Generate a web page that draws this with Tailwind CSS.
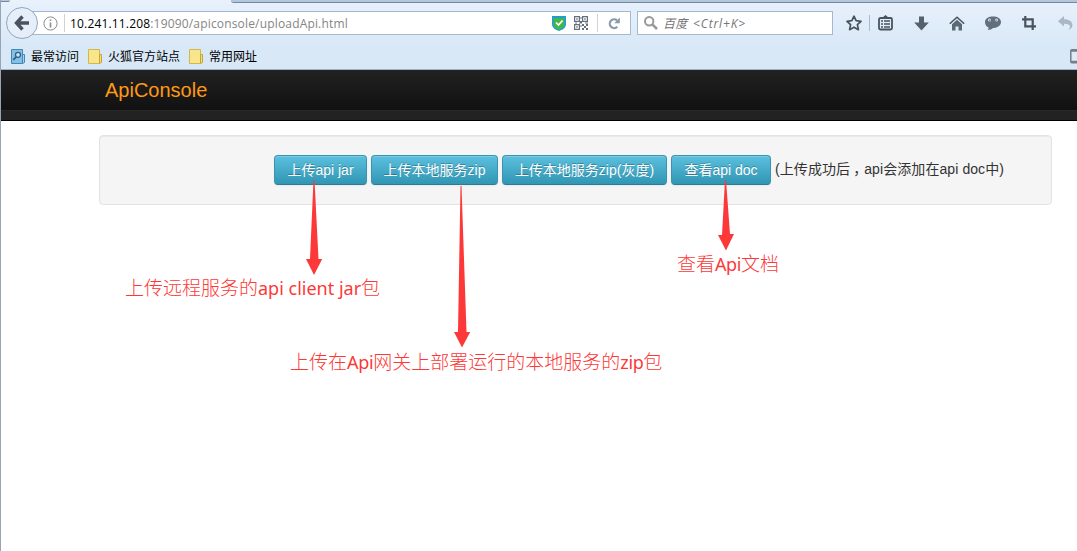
<!DOCTYPE html>
<html lang="zh-CN">
<head>
<meta charset="utf-8">
<title>ApiConsole</title>
<script src="https://cdn.jsdelivr.net/npm/@tailwindcss/browser@4"></script>
</head>
<body class="bg-white font-['Liberation_Sans','Noto_Sans_CJK_SC',sans-serif]">
<div class="relative flex h-[551px] w-[1077px] flex-col overflow-hidden border-l border-[#98a3b3]">

  <!-- Browser chrome -->
  <header class="flex h-[70px] flex-col border-b border-[#9fb3c8] bg-linear-to-b from-[#e8f1fc] to-[#d8e8f7] to-70% font-['Open_Sans','Noto_Sans_CJK_SC',sans-serif]">
    <div class="flex h-[3px]">
      <div class="h-[2px] w-[9px] rounded-br-[6px] border-b border-[#7288a3] bg-[#b5c7da]"></div>
      <div class="w-[221px]"></div>
      <div class="flex-1 rounded-bl-[4px] border-b border-[#7288a3] bg-[#b5c7da]"></div>
    </div>
    <div class="flex h-10 items-center">
      <div class="z-10 ml-[5px] flex size-8 shrink-0 items-center justify-center rounded-full border border-[#93a6bd] bg-[#e6eef9]">
        <svg class="h-[16px] w-[16px]" viewBox="0 0 16 16" fill="none" stroke="#49535f" stroke-width="3.400"><path d="M8.5 1.500 2.500 8l6 6.500M3 8h12"/></svg>
      </div>
      <div class="-ml-[6px] flex h-6 w-[599px] items-center border border-[#a5b8cd] bg-white">
        <svg class="ml-[10px] size-[15px]" viewBox="0 0 15 15" fill="none" stroke="#8c8c8c"><circle cx="7.5" cy="7.5" r="6.6"/><path d="M7.5 6.5v5M7.5 3.5v1.6" stroke-width="1.6"/></svg>
        <div class="ml-1.5 h-[18px] w-px bg-[#d2d2d2]"></div>
        <div class="ml-[5px] w-[482px] pt-px text-[12px] leading-6 tracking-[0.17px] whitespace-nowrap text-[#858585]"><span class="text-black">10.241.11.208</span>:19090/apiconsole/uploadApi.html</div>
        <svg class="h-[15px] w-[14px] shrink-0" viewBox="0 0 14 15"><path d="M0 0h14v8c0 4-4 6-7 7-3-1-7-3-7-7z" fill="#249bd0"/><path d="M1.5 2h11v6c0 3-3 5-5.500 6-2.500-1-5.500-3-5.500-6z" fill="#43b74a"/><path d="m4 6.500 2.500 2.500 4-4.500" fill="none" stroke="#fff" stroke-width="1.700"/></svg>
        <svg class="ml-2 size-[14px] shrink-0" viewBox="0 0 14 14" fill="#66707c"><path fill-rule="evenodd" d="M0 0h6v6H0zM1.200 1.200v3.600h3.600V1.200zM8 0h6v6H8zM9.200 1.200v3.600h3.600V1.200zM0 8h6v6H0zM1.200 9.200v3.600h3.600V9.200z"/><path d="M2.300 2.300h1.400v1.400H2.300zM10.300 2.300h1.400v1.400h-1.400zM2.300 10.300h1.400v1.400H2.300zM6.500 1h1v2h-1zM6 5h2v1.500H6zM1 6.500h2v1H1zM5 6.500h3v1H5zM11 6.500h3v1h-3zM8 8h2v2H8zM10 10h2v2h-2zM12 8h2v2h-2zM8 12h2v2H8zM12 12h2v2h-2zM6.500 9h1v2h-1z"/></svg>
        <div class="ml-[9px] h-[18px] w-px bg-[#d2d2d2]"></div>
        <svg class="ml-[10px] size-[13px]" viewBox="0 0 13 13"><path d="M9.300 9.800A4.400 4.400 0 1 1 9 3.300" fill="none" stroke="#8b99a9" stroke-width="2.200"/><path d="M11.800.5v5.700H6.200z" fill="#8b99a9"/></svg>
      </div>
      <div class="ml-1.5 flex h-6 w-[196px] items-center border border-[#a5b8cd] bg-white">
        <svg class="ml-1.5 size-[14px]" viewBox="0 0 14 14" fill="none" stroke="#999"><circle cx="5.200" cy="5.200" r="4.200" stroke-width="2"/><path d="m8.300 8.300 4.700 4.700" stroke-width="2.600"/></svg>
        <div class="ml-[5px] pt-px text-[12px] leading-6 tracking-[0.3px] whitespace-nowrap text-[#757575] italic [word-spacing:2px]">百度 <span class="tracking-[0.85px]">&lt;Ctrl+K&gt;</span></div>
      </div>
      <svg class="ml-[13px] size-4 shrink-0" viewBox="0 0 16 16" fill="none" stroke="#49535f" stroke-width="1.700" stroke-linejoin="round"><path d="m8 1.200 2.100 4.500 4.900.6-3.600 3.400 1 5L8 12.200l-4.400 2.500 1-5L1 6.300l4.900-.6z"/></svg>
      <div class="ml-[7px] h-4 w-px bg-[#a9bccf]"></div>
      <svg class="ml-2 h-4 w-[15px] shrink-0" viewBox="0 0 15 16"><path d="M4 3 7.500 0 11 3z" fill="#49535f"/><rect x="1" y="3" width="13" height="11.500" rx="1.500" fill="none" stroke="#49535f" stroke-width="1.800"/><path d="M3 6h2M6 6h6M3 9h2M6 9h6M3 12h2M6 12h6" stroke="#49535f" stroke-width="1.300"/></svg>
      <svg class="ml-[21px] h-[15px] w-[15px] shrink-0" viewBox="0 0 15 15" fill="#56616e"><path d="M5 .5h5v6h4.800L7.500 14.500.2 6.500H5z"/></svg>
      <svg class="ml-[20px] h-[15px] w-[16px] shrink-0" viewBox="0 0 16 15"><path d="M.8 7.800 8 1.200l7.200 6.600" fill="none" stroke="#49535f" stroke-width="1.500"/><path d="M3 8.300 8 3.800l5 4.500v6.200H9.500v-4h-3v4H3z" fill="#5d6875"/></svg>
      <svg class="ml-5 h-[15px] w-4 shrink-0" viewBox="0 0 16 15"><path d="M8 .5c4.500 0 8 2 8 5.500s-3.500 6-8 6c-.8 1-3 2-5.500 2 .9-.7 1.300-1.500 1-2.500C1.500 10.500 0 9 0 6 0 2.500 3.500.5 8 .5z" fill="#636f7d"/><g fill="#dce6ef"><circle cx="4.500" cy="4" r="1.500"/><circle cx="11.500" cy="4" r="1.500"/></g><circle cx="4.800" cy="4.200" r=".6" fill="#49535f"/><circle cx="11.200" cy="4.200" r=".6" fill="#49535f"/></svg>
      <svg class="ml-[21px] size-[14px] shrink-0" viewBox="0 0 14 14" fill="none" stroke="#49535f" stroke-width="2.200"><path d="M3.300 0v10.300H14M0 3.300h10.700V14"/></svg>
      <svg class="ml-[22px] h-[14px] w-[15px] shrink-0" viewBox="0 0 15 14"><path d="M6 0v3.200c5 0 8.500 2.300 8.500 6 0 2.300-1.700 4-4.500 4.500 1.700-1 2-2 2-3 0-1.800-2-3-6-3V10.500L0 5.300z" fill="#abb7c4"/></svg>
    </div>
    <div class="flex h-[26px] items-center text-[12px] text-black">
      <svg class="ml-[10px] size-[15px]" viewBox="0 0 15 15"><path d="M.5.500h11v14H.5z" fill="#83c0e3" stroke="#4686b2"/><path d="M11.500 5.500h2v8l-2 1z" fill="#a8d6ee" stroke="#4686b2"/><circle cx="7" cy="5.800" r="2.500" fill="#c8e5f5" stroke="#2c608c" stroke-width="1.300"/><path d="m5.200 7.800-3 3" stroke="#2c608c" stroke-width="1.700"/></svg>
      <span class="ml-[5px] w-[48px] pt-0.5 whitespace-nowrap">最常访问</span>
      <svg class="ml-[9px] size-[15px]" viewBox="0 0 15 15"><path d="M.5.500h11v14H.5z" fill="#f9e58b" stroke="#d4b748"/><path d="M11.500 5.500h2v8l-2 1z" fill="#f5dc78" stroke="#c6a53b"/></svg>
      <span class="ml-[5px] w-[72px] pt-0.5 whitespace-nowrap">火狐官方站点</span>
      <svg class="ml-[9px] size-[15px]" viewBox="0 0 15 15"><path d="M.5.500h11v14H.5z" fill="#f9e58b" stroke="#d4b748"/><path d="M11.500 5.500h2v8l-2 1z" fill="#f5dc78" stroke="#c6a53b"/></svg>
      <span class="ml-[5px] w-[48px] pt-0.5 whitespace-nowrap">常用网址</span>
      <svg class="ml-auto h-[15px] w-[7px]" viewBox="0 0 7 15"><rect x=".8" y=".8" width="9" height="13" rx="1" fill="#dfeaf5" stroke="#74808d" stroke-width="1.500"/><path d="M1 1.800h6M1 12.700h6" stroke="#74808d" stroke-width="1.700"/></svg>
    </div>
  </header>

  <!-- Site navigation -->
  <nav class="h-[51px] border-b border-black bg-[#222]">
    <div class="flex h-[41px] items-center border-b border-[#292929] bg-linear-to-b from-[#222] to-[#111] pl-[104px]">
      <a class="text-[20px] leading-5 text-[#ff9915]">ApiConsole</a>
    </div>
  </nav>

  <!-- Upload actions -->
  <main class="mt-[14px] ml-[98px] flex h-[70px] w-[953px] items-start gap-1 rounded-[4px] border border-[#e3e3e3] bg-[#f5f5f5] pt-[19px] pl-[174px] text-[14px] whitespace-nowrap text-[#333] shadow-[inset_0_1px_1px_rgba(0,0,0,0.05)]">
    <button class="h-[30px] w-[93px] rounded-[4px] border border-[#3a94b0] border-b-[#2a7b95] bg-linear-to-b from-[#5bc0de] to-[#2f96b4] text-white shadow-[inset_0_1px_0_rgba(255,255,255,0.2),0_1px_2px_rgba(0,0,0,0.05)] [text-shadow:0_-1px_0_rgba(0,0,0,0.25)]">上传api jar</button>
    <button class="h-[30px] w-[127px] rounded-[4px] border border-[#3a94b0] border-b-[#2a7b95] bg-linear-to-b from-[#5bc0de] to-[#2f96b4] text-white shadow-[inset_0_1px_0_rgba(255,255,255,0.2),0_1px_2px_rgba(0,0,0,0.05)] [text-shadow:0_-1px_0_rgba(0,0,0,0.25)]">上传本地服务zip</button>
    <button class="h-[30px] w-[165px] rounded-[4px] border border-[#3a94b0] border-b-[#2a7b95] bg-linear-to-b from-[#5bc0de] to-[#2f96b4] text-white shadow-[inset_0_1px_0_rgba(255,255,255,0.2),0_1px_2px_rgba(0,0,0,0.05)] [text-shadow:0_-1px_0_rgba(0,0,0,0.25)]">上传本地服务zip(灰度)</button>
    <button class="h-[30px] w-[100px] rounded-[4px] border border-[#3a94b0] border-b-[#2a7b95] bg-linear-to-b from-[#5bc0de] to-[#2f96b4] text-white shadow-[inset_0_1px_0_rgba(255,255,255,0.2),0_1px_2px_rgba(0,0,0,0.05)] [text-shadow:0_-1px_0_rgba(0,0,0,0.25)]">查看api doc</button>
    <span class="leading-[28px] tracking-[0.08px]">(上传成功后<span class="-mr-[3px] pl-[3px]">，</span>api会添加在api doc中)</span>
  </main>

  <!-- Annotations drawn over the page -->
  <svg class="absolute top-0 -left-px h-[551px] w-[1077px]" viewBox="0 0 1077 551" fill="#fd3838">
    <path d="M313.500 180h1l4 79h3.700L314 275l-8-16h4z"/>
    <path d="M460.500 186h1l5 146h3.700L462 347.500l-8-15.500h4z"/>
    <path d="M725 180h1l4 54h4l-8 16.500-8-15.500h4z"/>
  </svg>
  <div class="absolute top-[276px] left-[124px] text-[19px] leading-6 font-light whitespace-nowrap text-[#fd3838]">上传远程服务的<span class="font-['Noto_Sans'] text-[18px] font-normal">api client jar</span>包</div>
  <div class="absolute top-[350px] left-[289px] text-[19px] leading-6 font-light whitespace-nowrap text-[#fd3838]">上传在<span class="font-['Noto_Sans'] text-[18px] font-normal tracking-[-0.3px]">Api</span>网关上部署运行的本地服务的<span class="font-['Noto_Sans'] text-[18px] font-normal tracking-[-0.4px]">zip</span>包</div>
  <div class="absolute top-[252px] left-[676px] text-[19px] leading-6 font-light whitespace-nowrap text-[#fd3838]">查看<span class="font-['Noto_Sans'] text-[18px] font-normal tracking-[-0.4px]">Api</span>文档</div>
</div>
</body>
</html>
